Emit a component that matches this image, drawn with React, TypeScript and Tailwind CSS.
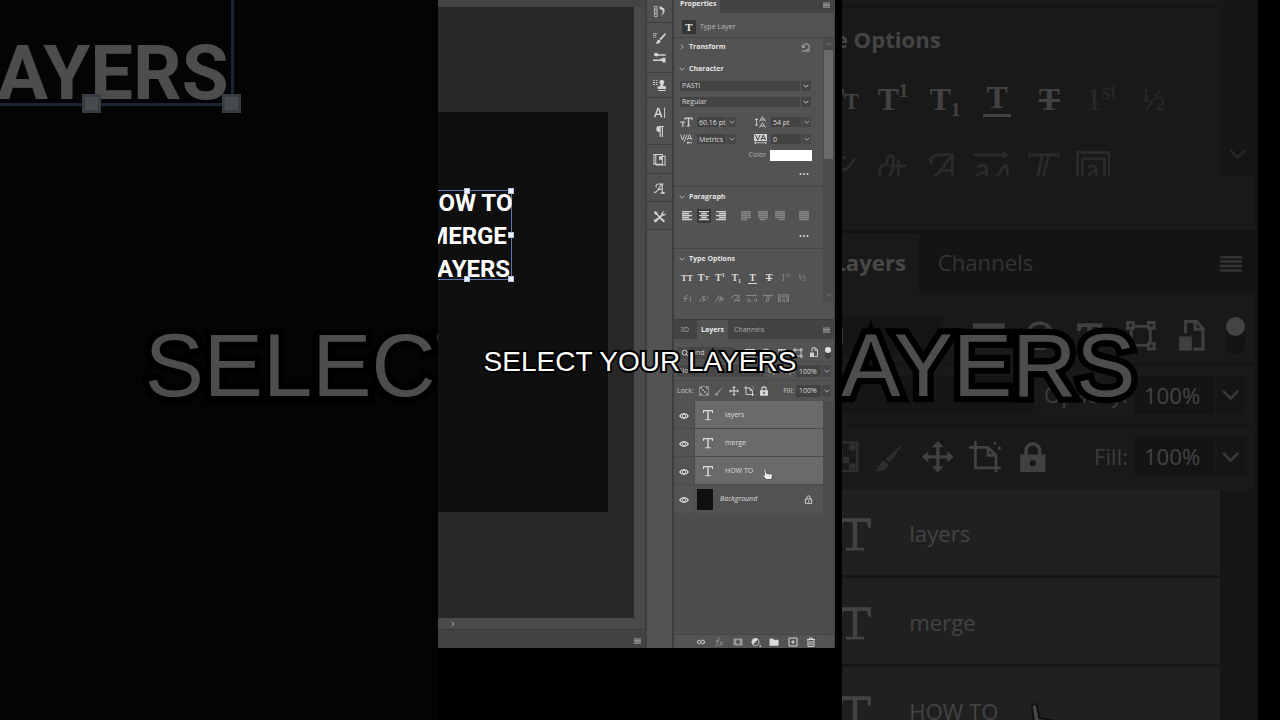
import React, { useState } from 'react';
import clsx from 'clsx';

interface IconProps {
    className?: string;
}

const Chevron: React.FC<IconProps> = ({ className }) => (
    <svg viewBox="0 0 10 10" className={clsx("h-2 w-2 shrink-0", className)} fill="none" stroke="currentColor" strokeWidth="1.1">
        <path d="M2 3.5 5 6.5 8 3.5" />
    </svg>
);

const MenuIcon: React.FC<IconProps> = ({ className }) => (
    <svg viewBox="0 0 7 6" className={clsx("h-[6px] w-[7px] shrink-0", className)} stroke="currentColor" strokeWidth="0.8">
        <path d="M0 1H7M0 2.4H7M0 3.8H7M0 5.2H7" />
    </svg>
);

const Dots = () => (
    <svg viewBox="0 0 10 4" className="h-1 w-[10px]" fill="currentColor">
        <circle cx="1.5" cy="2" r="1" />
        <circle cx="5" cy="2" r="1" />
        <circle cx="8.5" cy="2" r="1" />
    </svg>
);

const UndoIcon = () => (
    <svg viewBox="0 0 10 10" className="h-[10px] w-[10px]" fill="none" stroke="currentColor" strokeWidth="1">
        <path d="M2 5.5A3.2 3.2 0 1 1 5 8.2M1 9H9M1 3.2 2 5.8 4.4 4.4" />
    </svg>
);

const SearchIcon = () => (
    <svg viewBox="0 0 8 8" className="h-2 w-2" fill="none" stroke="currentColor" strokeWidth="1">
        <circle cx="3.6" cy="3.6" r="2.4" />
        <path d="M5.3 5.3 7.4 7.4" />
    </svg>
);

const dockGroups: { name: string; height: string; icons: { label: string; art: React.ReactNode }[] }[] = [
    {
        name: "history",
        height: "h-[23px]",
        icons: [{
            label: "History",
            art: <>
                <path d="M1.5 1.5h3v3h-3zM1.5 5.5h3v3h-3zM1.5 9.5h3v3h-3z" fill="none" stroke="currentColor" strokeWidth="0.8" />
                <path d="M6.5 3 9 .8V2.4C14 3 13.5 9 8.5 11.5 11 9 11.3 5.4 9 4.6V6z" />
            </>,
        }],
    },
    {
        name: "brushes",
        height: "h-[50px] gap-[6px]",
        icons: [
            {
                label: "Brush Settings",
                art: <>
                    <path d="M0 1h1.5v1H0zM2 1h1.5v1H2zM4 1h1v1H4zM0 3h1.5v1H0zM2 3h1.5v1H2zM0 5h1.5v1H0zM2 5h1.5v1H2z" />
                    <path d="M13.8 1.5 14 2.5 8.6 8.8 7 7.4 12.8 1.4zM6.5 8 8.2 9.4C7.8 12.5 5 13 2.4 12.4 4.5 11.6 4 8.5 6.5 8z" />
                </>,
            },
            {
                label: "Brushes",
                art: <>
                    <path d="M1 3.2C3 1 5 2 5.5 3.4H13.5V5.2H5.5C4.5 6.5 2.5 6 1 4.5z" />
                    <path d="M0 9.2H8V8.2H10V7.8C11.5 6.8 13 8 13.5 7.5V12.5C12.5 12 11.5 13 10 11.8V10.8H0z" />
                </>,
            },
        ],
    },
    {
        name: "clone",
        height: "h-[25px]",
        icons: [{
            label: "Clone Source",
            art: <path d="M0 1h2v1H0zM3 1h2v1H3zM0 3.2h2v1H0zM3 3.2h2v1H3zM0 5.4h2v1H0zM3 5.4h2v1H3zM9.5 1A2.4 2.4 0 0 1 11.5 5C10.8 6 11 7 11.2 7.8H14V10.8H5V7.8H7.8C8 7 8.2 6 7.5 5A2.4 2.4 0 0 1 9.5 1zM5.5 11.8H13.5V13H5.5z" />,
        }],
    },
    {
        name: "type",
        height: "h-[47px] gap-[6px]",
        icons: [
            {
                label: "Character",
                art: <path d="M1 12 4.7 2H6.6L10.3 12H8.4L7.6 9.7H3.6L2.8 12zM4.1 8.2H7.1L5.6 3.9zM12 1.5H13V13H12z" />,
            },
            {
                label: "Paragraph",
                art: <path d="M6.5 1H11.5V2.2H10.7V13H9.5V2.2H8.3V13H7.1V7.6A3.3 3.3 0 0 1 6.5 1z" />,
            },
        ],
    },
    {
        name: "libraries",
        height: "h-[29px]",
        icons: [{
            label: "Libraries",
            art: <>
                <path d="M1 1.5H10V12H1zM3 1.5V12M10 3.5H13V13H3" fill="none" stroke="currentColor" strokeWidth="1.1" />
                <path d="M6.5 3.5H10V8L8.3 6.7 6.5 8z" />
            </>,
        }],
    },
    {
        name: "glyphs",
        height: "h-[28px]",
        icons: [{
            label: "Glyphs",
            art: <path d="M1 10.5C2.5 12.5 5 10 9 2.5M4 5.5C2.5 5 3 2.5 6 2.2H11.3M10 2.5V11.5H12.5M8 12H12.5M5 8H10.5" fill="none" stroke="currentColor" strokeWidth="1.2" />,
        }],
    },
    {
        name: "tools",
        height: "h-[28px]",
        icons: [{
            label: "Tool Presets",
            art: <path d="M1 2.5 2.5 1 5 3.2V4.6L7.2 6.5 9.3 4.6C8.8 2.5 10.5 1 12.3 1.3L10.8 2.9 11.2 4.3 12.6 4.6 14 3.2C14.2 5 12.5 6.5 10.6 6L8.6 7.9 13 11.8 12 13 11 13.2 7.2 9.2 4.2 12C4 13.5 1 13.8 1 11.5 1 10.5 2 10 3 10L6 7.6 4 5.3H2.8z" />,
        }],
    },
];

const alignIcons = [
    { label: "Left align text", d: "M0 1H10M0 3H7M0 5H10M0 7H7M0 9H10", on: true },
    { label: "Center text", d: "M0 1H10M2 3H8M0 5H10M2 7H8M0 9H10", on: true, selected: true },
    { label: "Right align text", d: "M0 1H10M3 3H10M0 5H10M3 7H10M0 9H10", on: true },
    { label: "Justify last left", d: "M0 1H10M0 3H10M0 5H10M0 7H10M0 9H6", gap: true },
    { label: "Justify last centered", d: "M0 1H10M0 3H10M0 5H10M0 7H10M2 9H8" },
    { label: "Justify last right", d: "M0 1H10M0 3H10M0 5H10M0 7H10M4 9H10" },
    { label: "Justify all", d: "M0 1H10M0 3H10M0 5H10M0 7H10M0 9H10", wide: true },
];

const typeStyles: { label: string; glyph: React.ReactNode; dim?: boolean }[] = [
    { label: "All caps", glyph: <span className="text-[9px]">TT</span> },
    { label: "Small caps", glyph: <>T<span className="self-end text-[7px] leading-[13px]">T</span></> },
    { label: "Superscript", glyph: <>T<span className="self-start text-[6px] leading-[8px]">1</span></> },
    { label: "Subscript", glyph: <>T<span className="self-end text-[6px] leading-[8px]">1</span></> },
    { label: "Underline", glyph: <span className="border-b border-current px-px leading-[10px]">T</span> },
    { label: "Strikethrough", glyph: <span className="line-through">T</span> },
    { label: "Ordinals", glyph: <>1<span className="self-start text-[7px] leading-[9px]">st</span></>, dim: true },
    { label: "Fractions", glyph: "½", dim: true },
];

const openTypeIcons = [
    { label: "Ligatures", d: "M3 9.5V3.5C3 2 4 1.5 6 1.8M1 4.5H5.5M8.5 4.5V9.5M7 4.5H8.5M8.5 1.5V3" },
    { label: "Contextual alternates", d: "M5.5 4C2 4 1 9 3 9S6 6 6 4C5.5 8 8 6.5 10.5 2.5M4 2.5H7.5" },
    { label: "Discretionary ligatures", d: "M5 4.5C1.5 4 1 9 3.5 9S6.5 5 6.5 2.5C6 1 4 2 4.5 4M8 9V3M5.5 5H10.5" },
    { label: "Swash", d: "M1 9C4 9.5 6 5 8.5 2M2.5 4.5C1 2.5 3 1 9 1.5V9.5M4.5 6.5H9" },
    { label: "Stylistic alternates", d: "M0 1.5H10.5M9.5 .5V2.5M1 5.5C3 4 4 5 4 6.5V9.5M4 7C1 7 0 9 2 9S4 8 4 7M6 9C8 9 9 4 10.5 5V9.5" },
    { label: "Titling alternates", d: "M1.5 2.5V1.5H10.5V2.5M7.5 1.5 5.5 9.5M5.5 1.5 3.8 9.5" },
    { label: "Ornaments", d: "M.5 9.5V.8H10.5V9.5M2 9.5V2.8H9V9.5M4 5.5C6 4 6.5 5.5 6.5 9M6.5 6.5C4 6.5 3.5 9 5 9" },
];

const layers = ["layers", "merge", "HOW TO"];

const lockIcons = [
    {
        label: "Lock transparent pixels",
        art: <>
            <path d="M.5 .5H9.5V9.5H.5z" fill="none" stroke="currentColor" strokeWidth="0.8" />
            <path d="M1 1H3V3H1zM7 1H9V3H7zM3 3H5V5H3zM5 5H7V7H5zM1 7H3V9H1zM7 7H9V9H7z" />
        </>,
        dim: true,
    },
    {
        label: "Lock image pixels",
        art: <path d="M9.5 .5 5 6.8 3.7 5.8zM3.2 6.3 4.6 7.4C4 9.5 2 9.7.3 9.5 1.8 8.8 1.5 6.5 3.2 6.3z" />,
        dim: true,
    },
    {
        label: "Lock position",
        art: <path d="M5 0 6.8 2H5.5V4.5H8V3.2L10 5 8 6.8V5.5H5.5V8H6.8L5 10 3.2 8H4.5V5.5H2V6.8L0 5 2 3.2V4.5H4.5V2H3.2z" />,
    },
    {
        label: "Prevent auto-nesting",
        art: <path d="M2 0V8.5H10M0 2H6L8.5 4.5V10M6 2V4.5H8.5M8 1 8.5 .5M9.2 2.5 10 2" fill="none" stroke="currentColor" strokeWidth="0.9" />,
    },
    {
        label: "Lock all",
        art: <path fillRule="evenodd" d="M1 4.3H2.3V3A2.7 2.7 0 0 1 7.7 3V4.3H9V9.8H1zM3.4 4.3H6.6V3A1.6 1.6 0 0 0 3.4 3zM5 6A1 1 0 1 0 5 8 1 1 0 0 0 5 6z" />,
    },
];

const footerIcons = [
    { label: "Link layers", art: <path d="M4.5 3.5A1.9 1.9 0 1 0 4.5 6.5M5.5 3.5A1.9 1.9 0 1 1 5.5 6.5M3.5 5H6.5" fill="none" stroke="currentColor" strokeWidth="1" /> },
    { label: "Layer style", art: <path d="M1 9C2.5 9.5 3 7 3.5 4S4.5 .5 6 1.2M1.5 4H5.5M5 9 9.5 4M6 4.3 8.5 9" fill="none" stroke="currentColor" strokeWidth="0.8" />, dim: true },
    { label: "Add mask", art: <path fillRule="evenodd" d="M.5 1.5H9.5V8.5H.5zM5 3A2 2 0 1 0 5 7 2 2 0 0 0 5 3z" />, dim: true },
    { label: "Adjustment layer", art: <><circle cx="4.5" cy="5" r="3.6" fill="none" stroke="currentColor" strokeWidth="0.8" /><path d="M2 7.6A3.6 3.6 0 0 1 7 2.4zM8.5 8.5H10V10H8.5z" /></> },
    { label: "New group", art: <path d="M.5 1.5H4L5 2.7H9.5V8.7H.5z" /> },
    { label: "New layer", art: <path d="M1 1H9V9H1zM5 3V7M3 5H7" fill="none" stroke="currentColor" strokeWidth="1" /> },
    { label: "Delete layer", art: <path d="M1 2.5H9M3.5 2.2V1H6.5V2.2M2 3V9.3H8V3M4 4V8M6 4V8" fill="none" stroke="currentColor" strokeWidth="1" /> },
];

const SectionTitle: React.FC<{ title: string; closed?: boolean }> = ({ title, closed }) => (
    <button type="button" className="flex h-[18px] items-center gap-[3px] pl-1 font-bold text-[#e2e2e2]">
        <Chevron className={clsx("text-[#bdbdbd]", closed && "-rotate-90")} />
        {title}
    </button>
);

const FontSelect: React.FC<{ label: string; value: string }> = ({ label, value }) => (
    <div className="relative mr-3 ml-[6px] flex h-[10px] items-center bg-[#444] text-[#d8d8d8]">
        <select aria-label={label} defaultValue={value} className="h-full w-full appearance-none border-0 bg-transparent pl-[2px] leading-[10px] outline-none">
            <option>{value}</option>
        </select>
        <Chevron className="pointer-events-none absolute right-px" />
        <span className="absolute right-[10px] h-full w-px bg-[#535353]" />
    </div>
);

const ValueField: React.FC<{ label: string; value: string; tall?: boolean }> = ({ label, value, tall }) => (
    <div className={clsx("flex min-w-0 flex-1 items-center gap-px text-[#dedede]", tall ? "h-3" : "h-[10px]")}>
        <input aria-label={label} defaultValue={value} className={clsx("h-full w-full min-w-0 flex-1 bg-[#434343] outline-none", tall ? "pl-[3px]" : "pl-[2px]")} />
        <button type="button" aria-label={`${label} presets`} className="flex h-full w-[9px] items-center justify-center bg-[#474747] text-[#b8b8b8]">
            <Chevron />
        </button>
    </div>
);

const PropertiesPanel = () => (
    <section aria-label="Properties" className="flex h-[319px] flex-col bg-[#535353]">
        <div className="flex h-[13px] items-center justify-between bg-[#434343] pr-1">
            <h2 className="flex h-full items-center bg-[#535353] pr-1 pb-[6px] pl-[6px] font-bold text-[#e6e6e6]">Properties</h2>
            <MenuIcon className="mb-1 text-[#b0b0b0]" />
        </div>
        <div className="flex h-[25px] items-center gap-1 border-b border-[#454545] pt-1 pl-2 text-[#b9b9b9]">
            <span className="flex h-[14px] w-[14px] items-center justify-center bg-[#363636] font-['Liberation_Serif',serif] text-[11px] leading-[14px] font-bold text-[#e6e6e6]">T</span>
            Type Layer
        </div>
        <div className="flex h-[264px] overflow-hidden">
            <div className="min-w-0 flex-1">
                <div className="flex items-center justify-between pr-3 text-[#b0b0b0]">
                    <SectionTitle title="Transform" closed />
                    <button type="button" aria-label="Reset transform"><UndoIcon /></button>
                </div>
                <div className="mt-1 flex flex-col border-b border-[#454545] pb-2">
                    <SectionTitle title="Character" />
                    <div className="mt-[3px] flex flex-col gap-[6px]">
                        <FontSelect label="Font family" value="PASTI" />
                        <FontSelect label="Font style" value="Regular" />
                    </div>
                    <div className="mt-[10px] mr-3 ml-[6px] grid grid-cols-[56px_57px] justify-between gap-y-[7px] text-[#d0d0d0]">
                        <div className="flex h-[10px] items-center gap-1">
                            <svg viewBox="0 0 13 10" className="h-[10px] w-[13px] shrink-0" fill="currentColor">
                                <path d="M4.5 .5H12.5V3H11.7L11.2 1.7H9.2V8.5H10.2V9.5H6.8V8.5H7.8V1.7H5.8L5.3 3H4.5zM.5 4.5H5V6H4.3L4 5.4H3.3V8.7H3.8V9.5H1.7V8.7H2.2V5.4H1.5L1.2 6H.5z" />
                            </svg>
                            <ValueField label="Font size" value="60.16 pt" />
                        </div>
                        <div className="flex h-[10px] items-center gap-1">
                            <svg viewBox="0 0 13 12" className="h-[12px] w-[13px] shrink-0" fill="none" stroke="currentColor" strokeWidth="0.9">
                                <path d="M2.5 2.5V9.5M1 4 2.5 2.5 4 4M1 8.5 2.5 10 4 8.5M5.5 5.5 8.5 .8 11.5 5.5M6.5 4H10.5M5.5 11.5 8.5 6.8 11.5 11.5M6.5 10H10.5" />
                            </svg>
                            <ValueField label="Leading" value="54 pt" />
                        </div>
                        <div className="flex h-[10px] items-center gap-1">
                            <svg viewBox="0 0 13 10" className="h-[10px] w-[13px] shrink-0" fill="none" stroke="currentColor" strokeWidth="0.9">
                                <path d="M.5 .5 2.5 6 4.5 .5M7 .5 4 8M7 6 9.5 .5 12 6M8 4.5H11M12 8.8H7M8.5 7.5 7 8.8 8.5 10" />
                            </svg>
                            <ValueField label="Kerning" value="Metrics" />
                        </div>
                        <div className="flex h-[10px] items-center gap-1">
                            <svg viewBox="0 0 13 10" className="h-[10px] w-[13px] shrink-0" fill="none">
                                <path d="M0 0H13V7H0z" fill="currentColor" />
                                <path d="M1.5 1 3.7 6 6 1M7 6 9.3 1 11.5 6M8 4.5H10.7" stroke="#444" strokeWidth="1" />
                                <path d="M.5 8.8H12.5M2 7.5.5 8.8 2 10M11 7.5 12.5 8.8 11 10" stroke="currentColor" strokeWidth="0.8" />
                            </svg>
                            <ValueField label="Tracking" value="0" />
                        </div>
                    </div>
                    <div className="mt-[6px] mr-[11px] flex h-[10px] items-center justify-end gap-1 text-[#b5b5b5]">
                        Color
                        <button type="button" aria-label="Text color" className="h-[11px] w-[42px] bg-white" />
                    </div>
                    <button type="button" aria-label="More character options" className="mt-[10px] mr-[14px] flex h-2 items-center self-end text-[#d8d8d8]"><Dots /></button>
                </div>
                <div className="flex flex-col border-b border-[#454545] pt-px pb-2">
                    <SectionTitle title="Paragraph" />
                    <div className="mt-[3px] mr-3 ml-[6px] flex h-[14px] items-center gap-[3px]">
                        {alignIcons.map((icon) => (
                            <button
                                key={icon.label}
                                type="button"
                                aria-label={icon.label}
                                className={clsx(
                                    "flex h-[14px] w-[14px] items-center justify-center",
                                    icon.on ? "text-[#cfcfcf]" : "text-[#858585]",
                                    icon.selected && "bg-[#383838]",
                                    icon.gap && "ml-2",
                                    icon.wide && "ml-auto"
                                )}
                            >
                                <svg viewBox="0 0.5 10 10" className="h-[10px] w-[10px]" stroke="currentColor" strokeWidth="1.4"><path d={icon.d} /></svg>
                            </button>
                        ))}
                    </div>
                    <button type="button" aria-label="More paragraph options" className="mt-[9px] mr-[14px] flex h-2 items-center self-end text-[#d8d8d8]"><Dots /></button>
                </div>
                <div className="flex flex-col pt-px">
                    <SectionTitle title="Type Options" />
                    <div className="mt-[3px] mr-[13px] ml-[5px] flex justify-between font-['Liberation_Serif',serif] text-[10px] leading-[14px]">
                        {typeStyles.map(({ label, glyph, dim }) => (
                            <button key={label} type="button" aria-label={label} className={clsx("flex h-[14px] w-4 items-center justify-center", dim ? "text-[#888]" : "font-bold text-[#dadada]")}>
                                {glyph}
                            </button>
                        ))}
                    </div>
                    <div className="mt-[7px] ml-[5px] flex">
                        {openTypeIcons.map(({ label, d }) => (
                            <button key={label} type="button" aria-label={label} className="flex h-[14px] w-[16px] items-center justify-center text-[#8c8c8c]">
                                <svg viewBox="0 0 11 10" className="h-[10px] w-[11px]" fill="none" stroke="currentColor" strokeWidth="0.9"><path d={d} /></svg>
                            </button>
                        ))}
                    </div>
                </div>
            </div>
            <div className="flex w-[11px] flex-col items-center bg-[#4b4b4b] text-[#7c7c7c]">
                <Chevron className="my-[2px] rotate-180" />
                <div className="h-[109px] w-[9px] bg-[#6a6a6a]" />
                <Chevron className="mt-auto mb-[3px]" />
            </div>
        </div>
    </section>
);

const EyeIcon = () => (
    <svg viewBox="0 0 10 8" className="h-2 w-[10px]" fill="none" stroke="currentColor">
        <path d="M.8 4C2.5 .8 7.5 .8 9.2 4 7.5 7.2 2.5 7.2.8 4z" strokeWidth="1.4" />
        <circle cx="5" cy="4" r="1.6" fill="#444" strokeWidth="0.9" />
    </svg>
);

const LayerTypeIcon = () => (
    <svg viewBox="0 0 12 12" className="h-3 w-3 shrink-0" fill="currentColor">
        <path d="M1 1H11V4H10.2L9.8 2.2H6.7V10.3H8.8V11.2H3.2V10.3H5.3V2.2H2.2L1.8 4H1z" />
    </svg>
);

const HandCursor = () => (
    <svg viewBox="0 0 12 14" className="absolute top-[11px] left-[67px] h-[13px] w-[11px]">
        <path d="M2 1.5C2 .4 3.8 .4 3.8 1.5L4.6 5.5 9.5 6.3C11 6.6 11.3 7.5 11.2 8.6L10.5 12.5H4.6L1 8.7C.5 7.8 1.5 7 2.3 7.6L3 8.2z" fill="#f2f2f2" stroke="#333" strokeWidth="0.7" />
        <path d="M6.5 6V8M8.4 6.3V8.2" stroke="#777" strokeWidth="0.6" />
    </svg>
);

const LayersPanel = () => {
    const [selected, setSelected] = useState<string[]>(layers);

    return (
        <section aria-label="Layers" className="flex min-h-0 flex-1 flex-col border-t border-[#3c3c3c] bg-[#535353]">
            <div className="flex h-[19px] items-center bg-[#434343] pr-1 pl-[2px] text-[#a8a8a8]">
                <button type="button" className="h-full w-[21px] pl-1 text-left">3D</button>
                <button type="button" className="h-full w-[31px] bg-[#535353] text-center font-bold text-[#eaeaea]">Layers</button>
                <button type="button" className="h-full px-[6px]">Channels</button>
                <MenuIcon className="ml-auto text-[#a8a8a8]" />
            </div>
            <div className="flex h-[22px] items-center gap-[6px] pt-[5px] pr-[3px] pl-[3px] text-[#cfcfcf]">
                <div className="flex h-3 w-[58px] items-center gap-px bg-[#474747] pl-1">
                    <SearchIcon />
                    <select aria-label="Filter kind" className="h-full flex-1 appearance-none bg-transparent outline-none">
                        <option>Kind</option>
                    </select>
                </div>
                <div className="ml-auto flex items-center gap-[6px]">
                    <svg viewBox="0 0 10 10" className="h-[10px] w-[10px]" fill="currentColor"><path d="M0 1H10V9H0zM1.5 7.5H8.5L6 4 4.5 6 3.5 5z" fillRule="evenodd" /></svg>
                    <svg viewBox="0 0 10 10" className="h-[10px] w-[10px]" fill="none" stroke="currentColor"><circle cx="5" cy="5" r="4" /><path d="M2 8 8 2" /></svg>
                    <svg viewBox="0 0 10 10" className="h-[10px] w-[10px]" fill="currentColor"><path d="M1 1H9V3.5H8L7.5 2.2H5.8V8H7V9H3V8H4.2V2.2H2.5L2 3.5H1z" /></svg>
                    <svg viewBox="0 0 10 10" className="h-[10px] w-[10px]" fill="none" stroke="currentColor" strokeWidth="0.9">
                        <path d="M2 2H8V8H2z" />
                        <path d="M.8 .8H2.6V2.6H.8zM7.4 .8H9.2V2.6H7.4zM.8 7.4H2.6V9.2H.8zM7.4 7.4H9.2V9.2H7.4z" fill="#535353" />
                    </svg>
                    <svg viewBox="0 0 10 11" className="h-[11px] w-[10px]" fill="none" stroke="currentColor"><path d="M3 4.5V.8H6.5L8.5 3V9.5H5.5M6 .8V3.3H8.5" /><path d="M1 5.5H5V10H1z" fill="currentColor" stroke="none" /></svg>
                </div>
                <button type="button" aria-label="Toggle layer filtering" className="flex h-3 w-[6px] items-start rounded-full bg-[#414141]">
                    <span className="h-[6px] w-[6px] rounded-full bg-[#e0e0e0]" />
                </button>
            </div>
            <div className="flex h-[19px] items-center border-t border-[#4a4a4a] pr-[3px] pl-[3px] text-[#c8c8c8]">
                <div className="relative flex h-3 w-[87px] items-center bg-[#474747]">
                    <select aria-label="Blend mode" className="h-full w-full appearance-none bg-transparent pl-[2px] outline-none">
                        <option>Normal</option>
                    </select>
                    <Chevron className="pointer-events-none absolute right-px" />
                </div>
                <span className="flex-1 pr-[2px] text-right">Opacity:</span>
                <div className="flex w-[35px]"><ValueField label="Opacity" value="100%" tall /></div>
            </div>
            <div className="flex h-[21px] items-center border-t border-[#4a4a4a] pr-[3px] pb-px pl-[3px] text-[#c8c8c8]">
                <span className="w-[22px]">Lock:</span>
                <div className="flex gap-[5px]">
                    {lockIcons.map(({ label, art, dim }) => (
                        <button key={label} type="button" aria-label={label} className={dim ? "text-[#989898]" : "text-[#d6d6d6]"}>
                            <svg viewBox="0 0 10 10" className="h-[10px] w-[10px]" fill="currentColor">{art}</svg>
                        </button>
                    ))}
                </div>
                <span className="flex-1 pr-[2px] text-right">Fill:</span>
                <div className="flex w-[35px]"><ValueField label="Fill" value="100%" tall /></div>
            </div>
            <div className="flex flex-1 bg-[#4d4d4d]">
                <ul className="min-w-0 flex-1">
                    {layers.map((layer) => (
                        <li key={layer} className="flex h-7 border-b border-[#4a4a4a] bg-[#535353]">
                            <button type="button" aria-label={`Hide ${layer}`} className="flex w-[21px] items-center justify-center border-r border-[#4a4a4a] pt-[2px] text-[#dcdcdc]"><EyeIcon /></button>
                            <button
                                type="button"
                                onClick={() => setSelected(selected.includes(layer) ? selected.filter((l) => l !== layer) : [...selected, layer])}
                                className={clsx("relative flex flex-1 items-center gap-[11px] pt-px pl-[7px] text-[#dcdcdc]", selected.includes(layer) && "bg-[#6a6a6a]")}
                            >
                                <LayerTypeIcon />
                                {layer}
                                {layer === "HOW TO" && <HandCursor />}
                            </button>
                        </li>
                    ))}
                    <li className="flex h-7 bg-[#535353] pr-[10px] text-[#dcdcdc]">
                        <button type="button" aria-label="Hide Background" className="flex w-[21px] items-center justify-center border-r border-[#4a4a4a] pt-[2px]"><EyeIcon /></button>
                        <button type="button" className="flex flex-1 items-center gap-[7px] pl-[2px] italic">
                            <span className="h-[21px] w-4 bg-[#101010]" />
                            Background
                        </button>
                        <svg viewBox="0 0 10 10" className="h-[9px] w-[9px] self-center" fill="none" stroke="currentColor">
                            <path d="M1.5 4.5H8.5V9.3H1.5zM3 4.5V3A2 2 0 0 1 7 3V4.5M5 6V8" />
                        </svg>
                    </li>
                </ul>
                <div className="w-[11px] bg-[#4b4b4b]" />
            </div>
            <div className="flex h-[14px] items-center justify-between border-t border-[#454545] pr-[18px] pl-[22px]">
                {footerIcons.map(({ label, art, dim }) => (
                    <button key={label} type="button" aria-label={label} className={dim ? "text-[#999]" : "text-[#d8d8d8]"}>
                        <svg viewBox="0 0 10 10" className="h-[10px] w-[10px]" fill="currentColor">{art}</svg>
                    </button>
                ))}
            </div>
        </section>
    );
};

const Handle: React.FC<{ className: string }> = ({ className }) => (
    <span className={clsx("absolute h-[6px] w-[6px] border border-[#b4c4e2] bg-[#eef4fb]", className)} />
);

const Canvas = () => (
    <div className="flex min-w-0 flex-1 flex-col bg-[#434343]">
        <div className="mt-[7px] flex flex-1">
            <div className="relative flex-1 overflow-hidden bg-[#282828] pt-[105px] pr-[26px]">
                <div className="h-[400px] bg-[#0f0f0f]" />
                <div className="absolute top-[183px] -left-4 w-[90px] border border-[#5b78b0] text-center font-[Roboto,sans-serif] text-[24px] leading-[33px] font-bold text-white">
                    <p className="-mx-4 -mt-[6px] -mb-[7px] pt-[2px] whitespace-nowrap">HOW TO<br />MERGE<br />LAYERS</p>
                    <Handle className="-top-[3px] left-[41px]" />
                    <Handle className="-top-[3px] -right-[3px]" />
                    <Handle className="top-[41px] -right-[3px]" />
                    <Handle className="-right-[3px] -bottom-[3px]" />
                    <Handle className="-bottom-[3px] left-[41px]" />
                </div>
            </div>
            <div className="w-[11px] bg-[#4a4a4a]" />
        </div>
        <div className="flex h-[11px] items-center bg-[#4a4a4a] pl-[11px] text-[#c4c4c4]">
            <Chevron className="-rotate-90" />
        </div>
        <div className="flex h-[19px] items-center justify-end border-t border-[#3a3a3a] pr-1 pt-1 text-[#b4b4b4]">
            <MenuIcon />
        </div>
    </div>
);

const Dock = () => (
    <nav aria-label="Panels" className="flex w-[29px] flex-col border-x-2 border-[#3e3e3e] bg-[#535353]">
        {dockGroups.map(({ name, height, icons }) => (
            <div key={name} className={clsx("flex flex-col items-center justify-center border-b border-[#3e3e3e] bg-[#505050] pt-px text-[#d2d2d2]", height)}>
                {icons.map(({ label, art }) => (
                    <button key={label} type="button" aria-label={label}>
                        <svg viewBox="0 0 14 14" className="h-[13px] w-[13px]" fill="currentColor">{art}</svg>
                    </button>
                ))}
            </div>
        ))}
    </nav>
);

const VideoFrame = () => (
    <div className="relative flex h-screen w-[404px] shrink-0 flex-col overflow-hidden bg-black pr-[7px] pb-[72px] font-['Open_Sans','Noto_Sans',sans-serif] text-[7px] leading-[10px]">
        <div className="flex min-h-0 flex-1">
            <Canvas />
            <Dock />
            <div className="flex w-[161px] flex-col border-r border-[#444]">
                <PropertiesPanel />
                <LayersPanel />
            </div>
        </div>
        <p className="absolute inset-x-0 top-1/2 -mt-4 text-center font-['Liberation_Sans',sans-serif] text-[28px] leading-9 whitespace-nowrap text-white [paint-order:stroke_fill] [-webkit-text-stroke:4px_#000]">
            SELECT YOUR LAYERS
        </p>
    </div>
);

const App = () => (
    <main className="relative flex h-screen items-center justify-center overflow-hidden bg-black">
        <div aria-hidden="true" inert className="absolute inset-0 flex items-center justify-center overflow-hidden opacity-30">
            <div className="shrink-0 [zoom:3.168]">
                <VideoFrame />
            </div>
        </div>
        <div className="relative">
            <VideoFrame />
        </div>
    </main>
);

export default App;
